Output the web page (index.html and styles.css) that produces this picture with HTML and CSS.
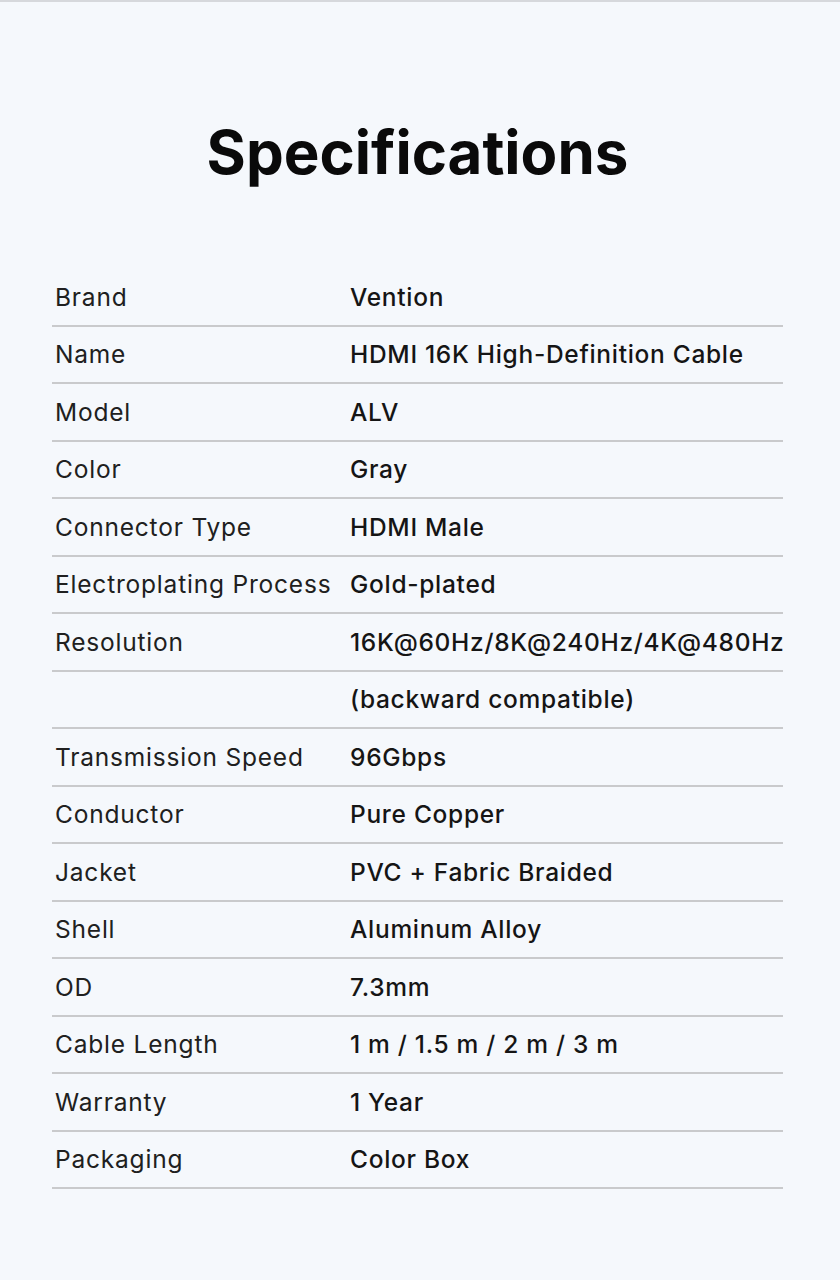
FILE: index.html
```html
<!DOCTYPE html>
<html lang="en">
<head>
    <meta charset="UTF-8">
    <meta name="viewport" content="width=device-width, initial-scale=1.0">
    <title>Specifications</title>
    <link rel="stylesheet" href="styles.css">
</head>
<body>
    <div class="page">
        <h1 class="title">Specifications</h1>

        <!-- spec table: label / value -->
        <div class="specs">
            <div class="spec-row"><div class="label">Brand</div><div class="value">Vention</div></div>
            <div class="spec-row"><div class="label">Name</div><div class="value">HDMI 16K High-Definition Cable</div></div>
            <div class="spec-row"><div class="label">Model</div><div class="value">ALV</div></div>
            <div class="spec-row"><div class="label">Color</div><div class="value">Gray</div></div>
            <div class="spec-row"><div class="label">Connector Type</div><div class="value">HDMI Male</div></div>
            <div class="spec-row"><div class="label">Electroplating Process</div><div class="value">Gold-plated</div></div>
            <div class="spec-row"><div class="label">Resolution</div><div class="value">16K@60Hz/8K@240Hz/4K@480Hz</div></div>
            <div class="spec-row"><div class="label"></div><div class="value">(backward compatible)</div></div>
            <div class="spec-row"><div class="label">Transmission Speed</div><div class="value">96Gbps</div></div>
            <div class="spec-row"><div class="label">Conductor</div><div class="value">Pure Copper</div></div>
            <div class="spec-row"><div class="label">Jacket</div><div class="value">PVC + Fabric Braided</div></div>
            <div class="spec-row"><div class="label">Shell</div><div class="value">Aluminum Alloy</div></div>
            <div class="spec-row"><div class="label">OD</div><div class="value">7.3mm</div></div>
            <div class="spec-row"><div class="label">Cable Length</div><div class="value">1 m / 1.5 m / 2 m / 3 m</div></div>
            <div class="spec-row"><div class="label">Warranty</div><div class="value">1 Year</div></div>
            <div class="spec-row"><div class="label">Packaging</div><div class="value">Color Box</div></div>
        </div>
    </div>
</body>
</html>
```

FILE: styles.css
```css
html, body {
    margin: 0;
    padding: 0;
    background-color: #f5f8fc;
}
body {
    font-family: Inter, "Open Sans", Arial, sans-serif;
    color: #1e1e1e;
}
.page {
    width: 840px;
    min-height: 1280px;
    box-sizing: border-box;
    border-top: 2px solid #d6d8dc;
    padding: 0 57px 0 52px;
}
.title {
    margin: 0;
    padding-top: 106px;
    height: 160px;
    box-sizing: border-box;
    text-align: center;
    font-size: 60px;
    font-weight: 700;
    line-height: 88px;
    color: #0a0a0a;
}
.specs {
    margin-top: 107px;
}
.spec-row {
    display: grid;
    grid-template-columns: 298px 1fr;
    align-items: center;
    height: 57.5px;
    box-sizing: border-box;
    border-bottom: 2px solid #c9cacc;
}
.label {
    padding-left: 3px;
    font-size: 24.5px;
    font-weight: 400;
    letter-spacing: 0.8px;
    color: #202020;
    white-space: nowrap;
}
.value {
    font-size: 24.5px;
    font-weight: 500;
    letter-spacing: 0.7px;
    color: #151515;
    white-space: nowrap;
}
```
